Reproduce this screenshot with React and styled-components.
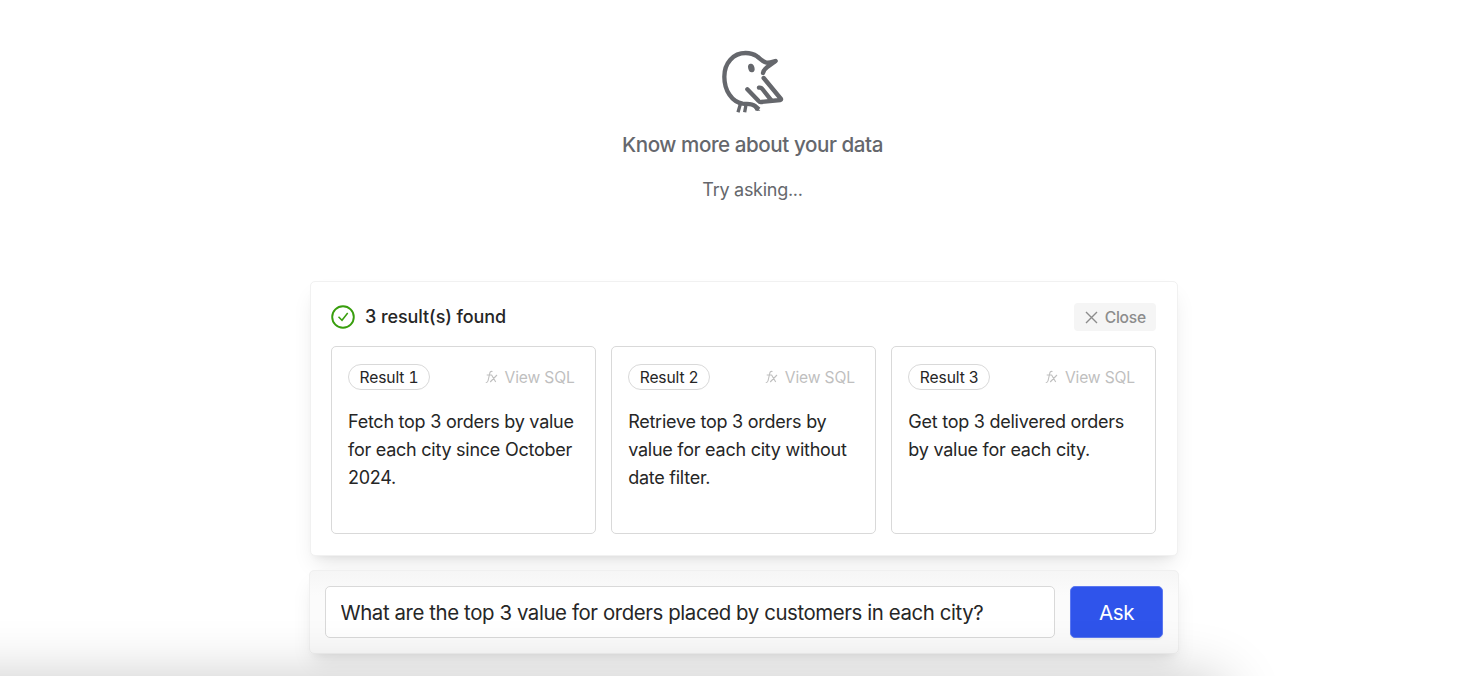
import React from "react";
import styled, { createGlobalStyle } from "styled-components";

const GlobalStyle = createGlobalStyle`
  * { box-sizing: border-box; }
  body {
    margin: 0;
    background: #fff;
    color: #262626;
    font-family: Inter, "Liberation Sans", sans-serif;
    overflow: hidden;
  }
`;

const Page = styled.main`
  position: relative;
  height: 676px;
  overflow: hidden;
  display: flex;
  flex-direction: column;
  padding-left: 309px;
`;

const Intro = styled.header`
  width: 887px;
  height: 281px;
  padding-top: 40px;
  display: flex;
  flex-direction: column;
  align-items: center;
  color: #65676c;
`;

const Logo = styled.svg`
  width: 90px;
  height: 85px;
  flex: none;
  margin-left: 4px;
`;

const Title = styled.h1`
  margin: 6px 0 0;
  font-size: 20.6px;
  line-height: 28px;
  font-weight: 500;
  letter-spacing: -0.43px;
`;

const Hint = styled.p`
  margin: 18px 0 0;
  font-size: 18px;
  line-height: 26px;
  letter-spacing: -0.27px;
`;

const Results = styled.section`
  width: 868px;
  height: 275px;
  margin-left: 1px;
  padding: 20px 21px 20px 20px;
  background: #fff;
  border: 1px solid #f1f1f1;
  border-radius: 5px;
  box-shadow: 0 12px 21px -5px rgba(0, 0, 0, 0.1), 0 5px 8px -5px rgba(0, 0, 0, 0.08);
`;

const ResultsHead = styled.div`
  display: flex;
  align-items: center;
  height: 30px;
  margin-bottom: 14px;
`;

const CheckIcon = styled.svg`
  width: 24px;
  height: 24px;
  margin-right: 10px;
`;

const Found = styled.h2`
  margin: 0;
  flex: 1;
  font-size: 18px;
  line-height: 26px;
  font-weight: 500;
  letter-spacing: -0.08px;
`;

const CloseButton = styled.button`
  display: flex;
  align-items: center;
  gap: 7px;
  height: 28px;
  padding: 0 10px 0 11px;
  border: 0;
  border-radius: 4px;
  background: #f5f5f5;
  color: #8c8c8c;
  font: 500 15.6px Inter, sans-serif;
  letter-spacing: -0.2px;
  white-space: nowrap;
`;

const Cards = styled.div`
  display: grid;
  grid-template-columns: repeat(3, 1fr);
  gap: 15.5px;
`;

const Card = styled.article`
  height: 188px;
  padding: 16px 16px;
  border: 1px solid #d9d9d9;
  border-radius: 5px;
`;

const CardHead = styled.div`
  display: flex;
  align-items: center;
  justify-content: space-between;
  height: 27px;
  padding-right: 4px;
`;

const Tag = styled.span`
  height: 26px;
  width: 82px;
  text-align: center;
  border: 1px solid #d9d9d9;
  border-radius: 13px;
  font-size: 15.6px;
  line-height: 25px;
  letter-spacing: -0.1px;
  font-variant-numeric: tabular-nums;
  white-space: nowrap;
`;

const ViewSql = styled.button`
  display: flex;
  align-items: center;
  gap: 7px;
  padding: 1px 0 0;
  border: 0;
  background: none;
  color: #bfbfbf;
  font: 400 15.6px Inter, sans-serif;
  letter-spacing: -0.15px;
  white-space: nowrap;
`;

const Description = styled.p`
  margin: 18px 0 0;
  font-size: 18px;
  line-height: 28px;
  letter-spacing: -0.25px;
  white-space: pre;
`;

const AskBar = styled.form`
  display: flex;
  gap: 15px;
  width: 870px;
  height: 84px;
  margin-top: 14px;
  padding: 15px 15px;
  background: linear-gradient(#f6f6f6, #fbfbfb 30%);
  border: 1px solid #f0f0f0;
  border-radius: 5px;
  box-shadow: 0 12px 21px -5px rgba(0, 0, 0, 0.1), 0 5px 8px -5px rgba(0, 0, 0, 0.08);
`;

const Question = styled.input`
  width: 730px;
  height: 52px;
  padding: 0 14.5px;
  background: #fff;
  border: 1px solid #d9d9d9;
  border-radius: 5px;
  outline: 0;
  color: #262626;
  font: 400 20.4px Inter, sans-serif;
  letter-spacing: -0.4px;
`;

const AskButton = styled.button`
  width: 93px;
  height: 52px;
  padding: 0;
  border: 1px solid #5c78f0;
  border-radius: 5px;
  background: #2f54eb;
  color: #fff;
  font: 400 20.6px Inter, sans-serif;
  letter-spacing: -0.5px;
  box-shadow: 0 2px 1px rgba(0, 0, 0, 0.04);
`;

/* Soft shade that rises from the lower edge of the viewport. */
const BottomShade = styled.div`
  position: absolute;
  left: -200px;
  top: 681px;
  width: 1425px;
  height: 300px;
  border-radius: 20px;
  box-shadow: 0 0 60px rgba(0, 0, 0, 0.24);
  pointer-events: none;
`;

const results = [
  { name: "Result 1", text: "Fetch top 3 orders by value\nfor each city since October\n2024." },
  { name: "Result 2", text: "Retrieve top 3 orders by\nvalue for each city without\ndate filter." },
  { name: "Result 3", text: "Get top 3 delivered orders\nby value for each city." },
];

const Bird = () => (
  <Logo viewBox="0 0 270 255" fill="none" stroke="currentColor" strokeWidth="13" strokeLinejoin="round">
    <path d="M197 63C186 66 176 71 166 67C156 63 150 55 141 49C131 42 120 39 107 39C70 39 43 69 43 110C43 152 66 186 98 191C113 193 124 189 135 198L147 208" />
    <path d="M197 63L171 82C164 87 161 91 159 99" strokeLinecap="round" />
    <path d="M161 114L213 177Q214 179 211 180L154 186Q149 187 146 183L112 148" strokeLinecap="round" />
    <path d="M147 143C151 142 154 143 157 147L184 181" strokeLinecap="round" />
    <path d="M91 193L84 217M108 194L104 217" strokeWidth="10" />
    <path d="M126 193L137 212H151L137 197Z" fill="currentColor" stroke="none" />
    <ellipse cx="124" cy="84" rx="9.500" ry="13" transform="rotate(-15 124 84)" fill="currentColor" stroke="none" />
  </Logo>
);

const FxIcon = () => (
  <svg width="13" height="14" viewBox="0 0 13 14" fill="none" stroke="currentColor" strokeWidth="1.1">
    <path d="M7.500 1.500C5.600 1 5 2 4.700 3.600L3.100 10.500C2.800 12 2.200 12.700 .8 12.500M1.700 5H6.800M6.600 5L10.700 12M12 5L5.200 12" />
  </svg>
);

export default function App() {
  return (
    <>
      <GlobalStyle />
      <Page>
        <Intro>
          <Bird />
          <Title>Know more about your data</Title>
          <Hint>Try asking...</Hint>
        </Intro>
        <Results>
          <ResultsHead>
            <CheckIcon viewBox="0 0 24 24" fill="none" stroke="#389e0d">
              <circle cx="12" cy="12" r="10.800" strokeWidth="1.900" />
              <path d="M7.500 11.800L11 15.300L16.700 8" strokeWidth="1.500" />
            </CheckIcon>
            <Found>3 result(s) found</Found>
            <CloseButton>
              <svg width="13" height="13" viewBox="0 0 13 13" stroke="currentColor" strokeWidth="1.400">
                <path d="M1 1L12 12M12 1L1 12" />
              </svg>
              Close
            </CloseButton>
          </ResultsHead>
          <Cards>
            {results.map((r) => (
              <Card key={r.name}>
                <CardHead>
                  <Tag>{r.name}</Tag>
                  <ViewSql><FxIcon />View SQL</ViewSql>
                </CardHead>
                <Description>{r.text}</Description>
              </Card>
            ))}
          </Cards>
        </Results>
        <AskBar onSubmit={(e) => e.preventDefault()}>
          <Question defaultValue="What are the top 3 value for orders placed by customers in each city?" />
          <AskButton>Ask</AskButton>
        </AskBar>
        <BottomShade />
      </Page>
    </>
  );
}
